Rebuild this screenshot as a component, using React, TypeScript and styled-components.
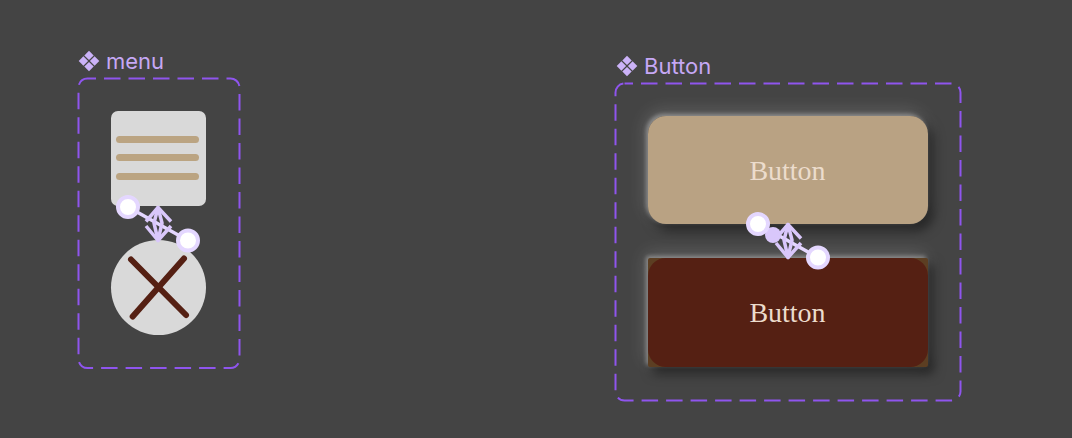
import styled, { createGlobalStyle } from 'styled-components';

const GlobalStyle = createGlobalStyle`
  html, body {
    margin: 0;
    padding: 0;
    width: 1072px;
    height: 438px;
    overflow: hidden;
    background: #444444;
  }
`;

const ComponentIcon = () => (
  <IconSvg viewBox="0 0 22 22">
    <path d="M11 0.7 15.7 5.4 11 10.1 6.3 5.4Z" />
    <path d="M16.6 6.3 21.3 11 16.6 15.7 11.9 11Z" />
    <path d="M5.4 6.3 10.1 11 5.4 15.7 0.7 11Z" />
    <path d="M11 11.9 15.7 16.6 11 21.3 6.3 16.6Z" />
  </IconSvg>
);

const DashedOutline = () => (
  <OutlineSvg>
    <OutlineRect x="0.5" y="0.5" rx="9" ry="9" />
  </OutlineSvg>
);

const Connector = ({ dot }: { dot?: boolean }) => (
  <ConnectorSvg viewBox="0 0 74 48">
    <line x1="12" y1="12" x2="72" y2="45.5" stroke="#e4d7ff" strokeWidth="3.5" />
    {dot && <circle cx="27" cy="23" r="8" fill="#d9c7fb" />}
    <ConnectorDiamond>
      <path d="M30 26.5 42 12.5 55 26.5" />
      <path d="M30 31 42 45.5 55 31" />
      <path d="M42 12.5 38 28 42 45.5 46 28Z" />
    </ConnectorDiamond>
    <Handle cx="12" cy="12" r="10" />
    <Handle cx="72" cy="45.5" r="10" />
  </ConnectorSvg>
);

export default function App() {
  return (
    <>
      <GlobalStyle />
      <Page>
        <MenuSet>
          <SetLabel>
            <ComponentIcon />
            menu
          </SetLabel>
          <MenuFrame>
            <DashedOutline />
            <MenuCard>
              <MenuLine />
              <MenuLine />
              <MenuLine />
            </MenuCard>
            <CloseCircle>
              <CloseIcon viewBox="0 0 95 95">
                <path d="M20 19.5 75 75" />
                <path d="M73 18.5 21.7 76.5" />
              </CloseIcon>
            </CloseCircle>
            <MenuConnector>
              <Connector />
            </MenuConnector>
          </MenuFrame>
        </MenuSet>
        <ButtonSet>
          <SetLabel $indent={1}>
            <ComponentIcon />
            Button
          </SetLabel>
          <ButtonFrame>
            <DashedOutline />
            <DemoButton>
              <ButtonFace $bg="#b9a283">Button</ButtonFace>
            </DemoButton>
            <DemoButton $corner="#5c3e22">
              <ButtonFace $bg="#552013">Button</ButtonFace>
            </DemoButton>
            <ButtonConnector>
              <Connector dot />
            </ButtonConnector>
          </ButtonFrame>
        </ButtonSet>
      </Page>
    </>
  );
}

const Page = styled.div`
  width: 1072px;
  height: 438px;
  box-sizing: border-box;
  display: flex;
  align-items: flex-start;
  padding: 47px 0 0 78px;
  background: #444444;
`;

const MenuSet = styled.div`
  width: 162px;
  margin-right: 375px;
`;

const ButtonSet = styled.div`
  width: 346px;
  margin-top: 5px;
`;

const SetLabel = styled.div<{ $indent?: number }>`
  height: 31px;
  display: flex;
  align-items: center;
  gap: 7px;
  padding: 0 0 3px ${(p) => p.$indent ?? 0}px;
  box-sizing: border-box;
  font-family: Inter, "Liberation Sans", sans-serif;
  font-size: 22px;
  line-height: 24px;
  color: #c6a8f5;
`;

const IconSvg = styled.svg`
  width: 22px;
  height: 22px;
  margin-right: -1px;
  flex: none;
  fill: #cbb2f8;
`;

const MenuFrame = styled.div`
  position: relative;
  height: 290.5px;
  box-sizing: border-box;
  padding: 33px 33px 0;
  display: flex;
  flex-direction: column;
  gap: 34px;
`;

const ButtonFrame = styled.div`
  position: relative;
  height: 318px;
  box-sizing: border-box;
  padding: 33px 33px 0;
  display: flex;
  flex-direction: column;
  gap: 34px;
`;

const OutlineSvg = styled.svg`
  position: absolute;
  inset: 0;
  width: 100%;
  height: 100%;
  overflow: visible;
  pointer-events: none;
`;

const OutlineRect = styled.rect`
  width: calc(100% - 1px);
  height: calc(100% - 1px);
  fill: none;
  stroke: #8f55ee;
  stroke-width: 2;
  stroke-dasharray: 16.5 8;
  stroke-dashoffset: 8;
`;

const MenuCard = styled.div`
  width: 95px;
  height: 95px;
  flex: none;
  box-sizing: border-box;
  padding: 25px 7px 0 5px;
  display: flex;
  flex-direction: column;
  gap: 11.4px;
  border-radius: 7px;
  background: #d9d9d9;
`;

const MenuLine = styled.div`
  height: 7px;
  border-radius: 4px;
  background: #bba482;
`;

const CloseCircle = styled.div`
  width: 95px;
  height: 95px;
  flex: none;
  border-radius: 50%;
  background: #d9d9d9;
`;

const CloseIcon = styled.svg`
  display: block;
  width: 95px;
  height: 95px;
  fill: none;
  stroke: #552013;
  stroke-width: 6;
  stroke-linecap: round;
`;

const DemoButton = styled.div<{ $corner?: string }>`
  width: 280px;
  height: 108.3px;
  flex: none;
  border-radius: ${(p) => (p.$corner ? '2px' : '18px')};
  background: ${(p) => p.$corner ?? 'transparent'};
  box-shadow:
    -2px -2px 4px rgba(255, 255, 255, 0.35),
    -3px -5px 18px rgba(255, 255, 255, 0.16),
    5px 6px 12px rgba(0, 0, 0, 0.55);
`;

const ButtonFace = styled.div<{ $bg: string }>`
  height: 100%;
  box-sizing: border-box;
  padding: 2px 1px 0 0;
  display: flex;
  align-items: center;
  justify-content: center;
  border-radius: 18px;
  background: ${(p) => p.$bg};
  font-family: "Liberation Serif", serif;
  font-size: 28px;
  color: #ecdccc;
`;

const ConnectorSvg = styled.svg`
  display: block;
  width: 74px;
  height: 48px;
  overflow: visible;
`;

const ConnectorDiamond = styled.g`
  fill: none;
  stroke: #d9c7fb;
  stroke-width: 3.5;
  stroke-linejoin: round;
`;

const Handle = styled.circle`
  fill: #ffffff;
  stroke: #e4d7ff;
  stroke-width: 4;
`;

const MenuConnector = styled.div`
  position: absolute;
  left: 38.3px;
  top: 116.7px;
`;

const ButtonConnector = styled.div`
  position: absolute;
  left: 131px;
  top: 129px;
`;
